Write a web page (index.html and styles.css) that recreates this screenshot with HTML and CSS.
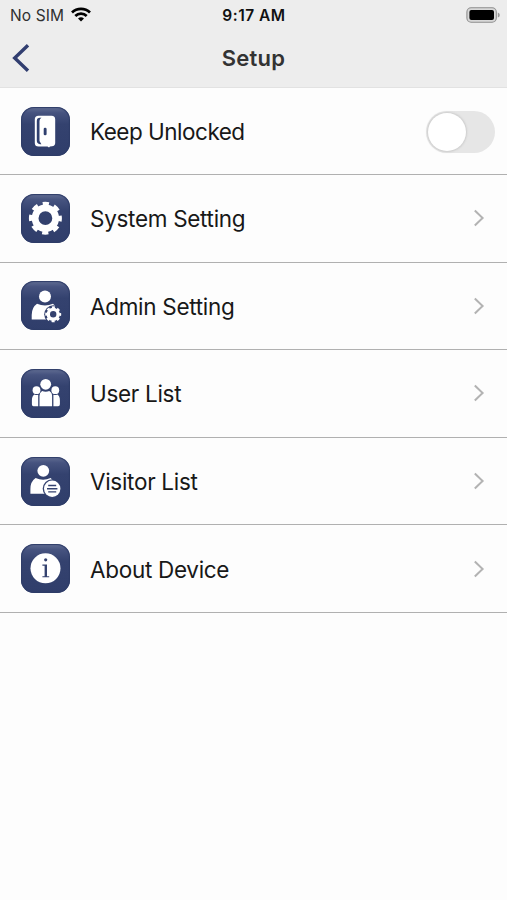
FILE: index.html
```html
<!DOCTYPE html>
<html lang="en">
<head>
<meta charset="utf-8">
<title>Setup</title>
<link rel="stylesheet" href="styles.css">
</head>
<body>
<header class="header">
  <div class="status">
    <div class="carrier"><span>No SIM</span>
      <svg class="wifi" width="20" height="15" viewBox="0 0 20 15"><g fill="none" stroke="#000" stroke-width="2.7"><path d="M1 5.5a12.8 12.8 0 0 1 18 0"/><path d="M4.3 9a8.1 8.1 0 0 1 11.4 0"/></g><path d="M10 14.6L7 11.6a4.3 4.3 0 0 1 6 0z"/></svg>
    </div>
    <span class="time">9:17 AM</span>
    <svg class="battery" width="34" height="16" viewBox="0 0 34 16"><rect x=".9" y=".8" width="29.4" height="14.4" rx="4.2" fill="#d8d8d8" stroke="#8e8e8e" stroke-width="1.1"/><rect x="3.400" y="3" width="24.600" height="10" rx="2"/><path d="M31.8 5.4q2 .5 2 2.6t-2 2.6z" fill="#999"/></svg>
  </div>
  <div class="nav">
    <svg class="back" width="20" height="30" viewBox="0 0 20 30"><path d="M18 2.200L4.700 15 18 27.800" fill="none" stroke="#313e70" stroke-width="3.4"/></svg>
    <h1 class="title">Setup</h1>
  </div>
</header>
<main class="list">
  <div class="row">
    <svg class="icon" viewBox="0 0 49 49"><path d="M17.500 8.700H30.500q3.700.2 3.700 3.500V36q0 3-3.200 3.200l-2 .3-1 1-1.500-1H17.500q-3.700 0-3.700-3.500V12.200q0-3.300 3.700-3.500z" fill="#fff"/><path d="M20.500 10.800h-1.500q-3.200 0-3.200 3.200v19.500q0 3.300 3.200 3.700h1.400l-1.900-3.200V14q0-2.300 2-3.200z" fill="#30406f"/><rect x="22.700" y="20.700" width="2.900" height="7.600" rx="1.300" fill="#30406f"/></svg>
    <span class="label unlocked">Keep Unlocked</span>
    <span class="toggle"><span class="knob"></span></span>
  </div>
  <div class="row">
    <svg class="icon" viewBox="0 0 49 49"><g fill="none" stroke="#fff"><circle cx="24.400" cy="24.200" r="10.300" stroke-width="6.800"/><circle cx="24.400" cy="24.200" r="14.500" stroke-width="4" stroke-dasharray="6.200 5.188" stroke-dashoffset="3.100"/></g></svg>
    <span class="label">System Setting</span>
    <svg class="chevron" viewBox="0 0 12 18"><path d="M1.800 1.500L9.600 9l-7.800 7.500"/></svg>
  </div>
  <div class="row">
    <svg class="icon" viewBox="0 0 49 49"><g fill="#fff"><circle cx="24" cy="15.500" r="6"/><path d="M10.700 38.500V34q0-7.500 5.300-11.200 8 3.400 16 0l2 2-10 8 1.500 5.700z"/></g><circle cx="32.200" cy="33.300" r="9" fill="#34426f"/><g fill="none" stroke="#fff"><circle cx="32.200" cy="33.300" r="4.900" stroke-width="3.400"/><circle cx="32.200" cy="33.300" r="6.900" stroke-width="2.200" stroke-dasharray="3 2.419" stroke-dashoffset="1.500"/></g></svg>
    <span class="label">Admin Setting</span>
    <svg class="chevron" viewBox="0 0 12 18"><path d="M1.800 1.500L9.600 9l-7.800 7.500"/></svg>
  </div>
  <div class="row">
    <svg class="icon" viewBox="0 0 49 49"><g fill="#fff"><circle cx="24.700" cy="15.300" r="5.400"/><circle cx="15.500" cy="21.200" r="3.900"/><circle cx="34.300" cy="21.200" r="3.900"/><path d="M18.500 37.200V27q0-3.500 2.600-5 3.600 1.600 7.200 0 2.800 1.500 2.800 5v10.200zM17.200 37.200h-4.700q-1.600 0-1.600-2v-4q0-4.300 2.500-5.800 2 .8 3.800.4zM32.400 37.200h4.700q1.800 0 1.800-2v-4q0-4.300-2.500-5.800-2 .8-4 .4z"/></g></svg>
    <span class="label">User List</span>
    <svg class="chevron" viewBox="0 0 12 18"><path d="M1.800 1.500L9.600 9l-7.800 7.500"/></svg>
  </div>
  <div class="row">
    <svg class="icon" viewBox="0 0 49 49"><g fill="#fff"><circle cx="22.300" cy="13.800" r="5.900"/><path d="M9.400 36.800V32q0-7.500 5.200-11 7.500 3.400 15 0l3 3-9 8 1 4.800z"/></g><circle cx="31.200" cy="31.800" r="9.500" fill="#34426f"/><circle cx="31.200" cy="31.800" r="8.200" fill="#fff"/><path d="M27.200 28.500h8M26 31.700h10.400M27.200 34.900h8" stroke="#34426f" stroke-width="1.400"/></svg>
    <span class="label">Visitor List</span>
    <svg class="chevron" viewBox="0 0 12 18"><path d="M1.800 1.500L9.600 9l-7.800 7.500"/></svg>
  </div>
  <div class="row">
    <svg class="icon" viewBox="0 0 49 49"><circle cx="24.500" cy="24.300" r="15" fill="#fff"/><g fill="#34426f"><circle cx="24.700" cy="15.800" r="1.600"/><path d="M21.400 20.600h4.600v11.600h2.200v1.100h-6.800v-1.100h2.200V21.700h-2.200z"/></g></svg>
    <span class="label">About Device</span>
    <svg class="chevron" viewBox="0 0 12 18"><path d="M1.800 1.500L9.600 9l-7.800 7.500"/></svg>
  </div>
</main>
</body>
</html>
```
FILE: styles.css
```css
* { box-sizing: border-box; }
body {
  margin: 0;
  min-height: 900px;
  background: #fdfdfd;
  color: #181818;
  font-family: Inter, "Liberation Sans", sans-serif;
}
svg { display: block; }
.header {
  height: 88px;
  background: #ededed;
  border-bottom: 1px solid #e2e2e2;
}
.status {
  display: grid;
  grid-template-columns: 1fr auto 1fr;
  align-items: center;
  height: 30px;
  padding: 0 7px 0 10px;
  font-size: 15.5px;
}
.carrier { display: flex; align-items: center; gap: 7px; color: #303030; letter-spacing: 0.1px; }
.wifi { margin-top: -2px; }
.time { margin-right: 2px; font-weight: 600; color: #111; letter-spacing: 0.5px; }
.battery { justify-self: end; margin-top: -1px; }
.nav {
  display: grid;
  grid-template-columns: 40px 1fr 40px;
  align-items: center;
  height: 55px;
  padding: 0 10px;
}
.title {
  margin: 0;
  text-align: center;
  font-size: 22px;
  font-weight: 600;
  letter-spacing: 0.2px;
  color: #333;
}
.row {
  display: flex;
  align-items: center;
  height: 87.6px;
  padding: 0 12px 0 21px;
  border-bottom: 1px solid #b0b0b0;
}
.row:first-child { height: 87px; }
.icon {
  width: 49px;
  height: 49px;
  margin-right: 20px;
  border-radius: 13px;
  background: linear-gradient(#626e93 0, #46537f 12%, #34426f 35%, #303e6b 100%);
  box-shadow: inset 0 0 1px 1px #2e3c68;
}
.label {
  flex: 1;
  padding-top: 2px;
  font-size: 22.5px;
  line-height: 28px;
  letter-spacing: -0.3px;
}
.unlocked { letter-spacing: -0.5px; }
.toggle {
  width: 69px;
  height: 42px;
  margin-top: 1px;
  padding: 2px;
  border-radius: 21px;
  background: #e6e6e6;
}
.knob {
  display: block;
  width: 38px;
  height: 38px;
  border-radius: 50%;
  background: #fff;
  box-shadow: 0 0 2px 1px #ccc;
}
.chevron {
  width: 12px;
  height: 18px;
  margin-right: 10px;
  fill: none;
  stroke: #b3b3b3;
  stroke-width: 2;
}
```
